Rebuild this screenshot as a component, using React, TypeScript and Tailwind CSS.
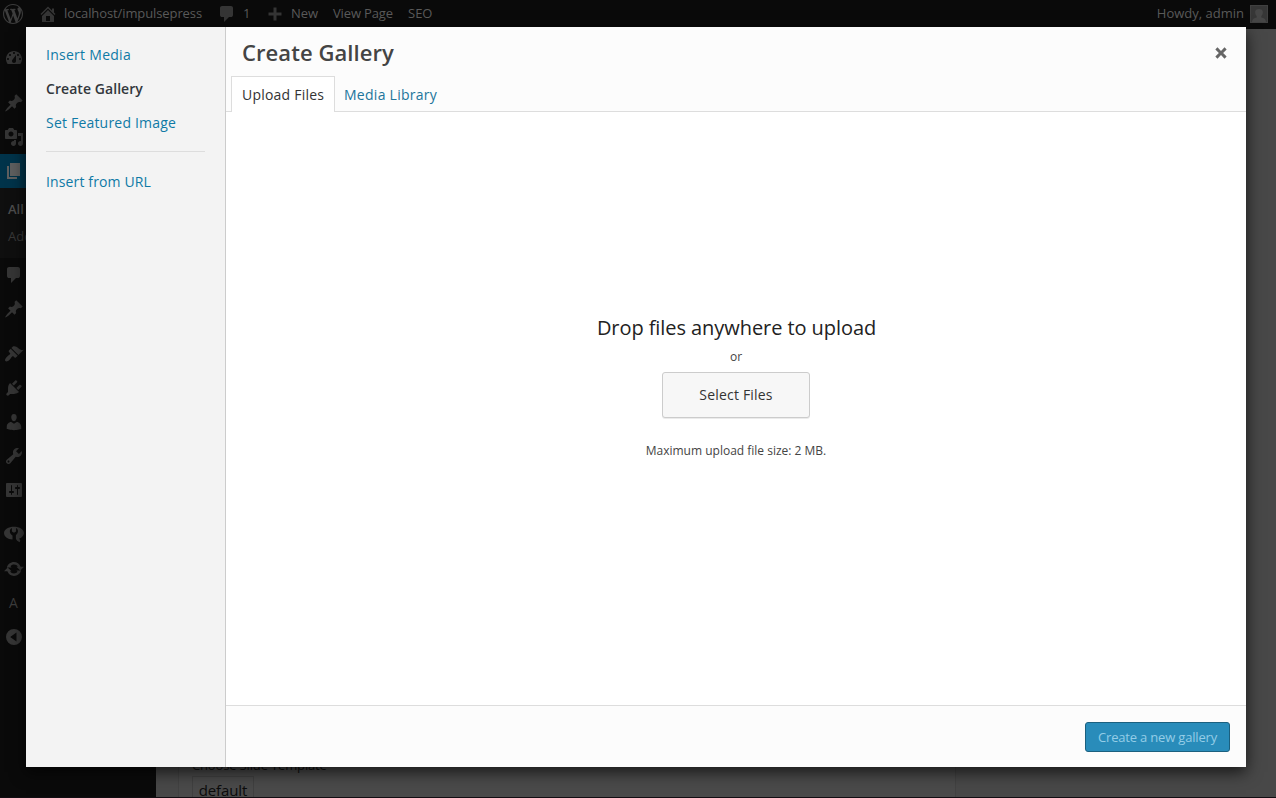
import React from "react";

const paths = {
  wordpress:
    "M20 10c0-5.51-4.49-10-10-10C4.48 0 0 4.49 0 10c0 5.52 4.48 10 10 10 5.51 0 10-4.48 10-10zM7.78 15.37L4.37 6.22c.55-.02 1.17-.08 1.17-.08.5-.06.44-1.13-.06-1.11 0 0-1.45.11-2.37.11-.18 0-.37 0-.58-.01C4.12 2.69 6.87 1.11 10 1.11c2.33 0 4.45.87 6.05 2.34-.68-.11-1.65.39-1.65 1.58 0 .74.45 1.36.9 2.1.35.61.55 1.36.55 2.46 0 1.49-1.4 5-1.4 5l-3.03-8.37c.54-.02.82-.17.82-.17.5-.05.44-1.25-.06-1.22 0 0-1.44.12-2.38.12-.87 0-2.33-.12-2.33-.12-.5-.03-.56 1.2-.06 1.22l.92.08 1.26 3.41zM17.41 10c.24-.64.74-1.87.43-4.25.7 1.29 1.05 2.71 1.05 4.25 0 3.29-1.73 6.24-4.4 7.78.97-2.59 1.94-5.2 2.92-7.78zM6.1 18.09C3.12 16.65 1.11 13.53 1.11 10c0-1.3.23-2.48.72-3.59C3.25 10.3 4.67 14.2 6.1 18.09zm4.03-6.63l2.58 6.98c-.86.29-1.76.45-2.71.45-.79 0-1.57-.11-2.29-.33.81-2.38 1.62-4.74 2.42-7.1z",
  home: "M16 8.5l1.53 1.53-1.06 1.06L10 4.6l-6.47 6.49-1.06-1.06L10 2.5l4 4v-2h2v4zm-6-2.46l6 5.99V18H4v-5.97zM12 17v-5H8v5h4z",
  comments:
    "M5 2h9q.82 0 1.41.59T16 4v7q0 .82-.59 1.41T14 13h-2l-5 5v-5H5q-.82 0-1.41-.59T3 11V4q0-.82.59-1.41T5 2z",
  plus: "M8.5 3.5h3v5h5v3h-5v5h-3v-5h-5v-3h5z",
  dashboard:
    "M3.76 16h12.48c1.1-1.37 1.76-3.11 1.76-5 0-4.42-3.58-8-8-8s-8 3.58-8 8c0 1.89.66 3.63 1.76 5zM10 4c.55 0 1 .45 1 1s-.45 1-1 1-1-.45-1-1 .45-1 1-1zM6 6c.55 0 1 .45 1 1s-.45 1-1 1-1-.45-1-1 .45-1 1-1zm8 0c.55 0 1 .45 1 1s-.45 1-1 1-1-.45-1-1 .45-1 1-1zm-5.37 5.55L12 7v6c0 1.1-.9 2-2 2s-2-.9-2-2c0-.57.24-1.08.63-1.45zM4 10c.55 0 1 .45 1 1s-.45 1-1 1-1-.45-1-1 .45-1 1-1zm12 0c.55 0 1 .45 1 1s-.45 1-1 1-1-.45-1-1 .45-1 1-1z",
  pin: "M10.44 3.02l1.82-1.82 6.36 6.35-1.83 1.82c-1.05-.68-2.48-.57-3.41.36l-.75.75c-.92.93-1.04 2.35-.35 3.41l-1.83 1.82-2.41-2.41-2.8 2.79c-.42.42-3.38 2.71-3.8 2.29s1.86-3.39 2.28-3.81l2.79-2.79L4.1 9.36l1.83-1.82c1.05.69 2.48.57 3.4-.36l.75-.75c.93-.92 1.05-2.35.36-3.41z",
  media:
    "M13 11V4c0-.55-.45-1-1-1h-1.67L9 1H5L3.67 3H2c-.55 0-1 .45-1 1v7c0 .55.45 1 1 1h10c.55 0 1-.45 1-1zM7 4.5c1.38 0 2.5 1.12 2.5 2.5S8.38 9.5 7 9.5 4.5 8.38 4.5 7 5.62 4.5 7 4.5zM14 6h5v10.5c0 1.38-1.12 2.5-2.5 2.5S14 17.88 14 16.5s1.12-2.5 2.5-2.5c.17 0 .34.02.5.05V9h-3V6zm-4 8.05V13h2v3.5c0 1.38-1.12 2.5-2.5 2.5S7 17.88 7 16.5 8.12 14 9.5 14c.17 0 .34.02.5.05z",
  page: "M6 15V2h10v13H6zm-1 1h8v2H3V5h2v11z",
  appearance:
    "M14.48 11.06L7.41 3.99l1.5-1.5c.5-.56 2.3-.47 3.51.32 1.21.8 1.43 1.28 2.91 2.1 1.18.64 2.45 1.26 4.45.85zm-.71.71L6.7 4.7 4.93 6.47c-.39.39-.39 1.02 0 1.41l1.06 1.06c.39.39.39 1.03 0 1.42-.6.6-1.43 1.11-2.21 1.69-.35.26-.7.53-1.01.84C1.43 14.23.4 16.08 1.4 17.07c.99 1 2.84-.03 4.18-1.36.31-.31.58-.66.85-1.02.57-.78 1.08-1.61 1.69-2.21.39-.39 1.02-.39 1.41 0l1.06 1.06c.39.39 1.02.39 1.41 0z",
  plugins:
    "M13.11 4.36L9.87 7.6 8 5.73l3.24-3.24c.35-.34 1.05-.2 1.56.32.52.51.66 1.21.31 1.55zm-8 1.77l.91-1.12 9.01 9.01-1.19.84c-.71.71-2.63 1.16-3.82 1.16H6.14L4.9 17.26c-.59.59-1.54.59-2.12 0-.59-.58-.59-1.53 0-2.12l1.24-1.24v-3.88c0-1.13.4-3.19 1.09-3.89zm7.26 3.97l3.24-3.24c.34-.35 1.04-.21 1.55.31.52.51.66 1.21.31 1.55l-3.24 3.25z",
  users:
    "M10 9.25c-2.27 0-2.73-3.44-2.73-3.44C7 4.02 7.82 2 9.97 2c2.16 0 2.98 2.02 2.71 3.81 0 0-.41 3.44-2.68 3.44zm0 2.57L12.72 10c2.39 0 4.52 2.33 4.52 4.53v2.49s-3.65 1.13-7.24 1.13c-3.65 0-7.24-1.13-7.24-1.13v-2.49c0-2.25 1.94-4.48 4.47-4.48z",
  tools:
    "M16.68 9.77c-1.34 1.34-3.3 1.67-4.95.99l-5.41 6.52c-.99.99-2.59.99-3.58 0s-.99-2.59 0-3.57l6.52-5.42c-.68-1.65-.35-3.61.99-4.95 1.28-1.28 3.12-1.62 4.72-1.06l-2.89 2.89 2.82 2.82 2.86-2.87c.53 1.58.18 3.39-1.08 4.65zM3.81 16.21c.4.39 1.04.39 1.43 0 .4-.4.4-1.04 0-1.43-.39-.4-1.03-.4-1.43 0-.39.39-.39 1.03 0 1.43z",
  settings:
    "M18 16V4c0-.55-.45-1-1-1H3c-.55 0-1 .45-1 1v12c0 .55.45 1 1 1h14c.55 0 1-.45 1-1zM8 11h1c.55 0 1 .45 1 1s-.45 1-1 1H8v1.5c0 .28-.22.5-.5.5s-.5-.22-.5-.5V13H6c-.55 0-1-.45-1-1s.45-1 1-1h1V5.5c0-.28.22-.5.5-.5s.5.22.5.5V11zm5-2h-1c-.55 0-1-.45-1-1s.45-1 1-1h1V5.500c0-.28.22-.5.5-.5s.5.22.5.5V7h1c.55 0 1 .45 1 1s-.45 1-1 1h-1v5.500c0 .28-.22.5-.5.5s-.5-.22-.5-.5V9z",
  wrenchRing:
    "M10 2.800C4.500 2.800 0 5.400 0 9c0 3.500 3.500 6.200 8.500 6.600V11.400C6.400 10.500 5.600 8.600 5.900 6.600 6.200 5.400 6.900 4.600 7.900 4.100V7.500L10 8.700l2.100-1.200V4.100C14.600 5.400 14.700 9.400 11.900 11v3.600c.4 1.700 1.700 3 3.900 3.600l.5-2-1.200-1.400C18 13.500 20 11.500 20 9c0-3.600-4.500-6.200-10-6.200z",
  sync: "M10 3c3 0 5.600 1.900 6.600 4.700H20l-3.700 3.800-3.900-3.800h1.500C13.100 6.300 11.700 5.500 10 5.500c-1.400 0-2.700.7-3.500 1.700l1.100 1.200H2.900c.7-3.100 3.700-5.400 7.100-5.400zM0 12.300l3.700-3.800 3.900 3.800H6.100c.8 1.400 2.200 2.200 3.900 2.200 1.400 0 2.700-.7 3.500-1.700l-1.100-1.200h4.700c-.7 3.100-3.700 5.400-7.100 5.400-3 0-5.600-1.900-6.600-4.700z",
  collapse: "M10 2a8 8 0 100 16 8 8 0 000-16zM12.500 5.500v9L6.200 10z",
  close:
    "M12.12 10l3.53 3.53-2.12 2.12L10 12.12l-3.54 3.54-2.12-2.12L7.88 10 4.34 6.46l2.12-2.12L10 7.88l3.54-3.53 2.12 2.12z",
};

type IconName = keyof typeof paths;

function Icon({ name, className = "size-5" }: { name: IconName; className?: string }) {
  return (
    <svg viewBox="0 0 20 20" fill="currentColor" fillRule="evenodd" className={`shrink-0 ${className}`}>
      <path d={paths[name]} />
    </svg>
  );
}

function MenuRow({ name, active = false }: { name: IconName; active?: boolean }) {
  return (
    <div
      className={
        active
          ? "flex h-[34px] items-center bg-[#00334a] pl-1 text-[#5f5f5f]"
          : "flex h-[34px] items-center pl-1 text-[#353535]"
      }
    >
      <Icon name={name} />
    </div>
  );
}

function AdminBar() {
  return (
    <header className="flex h-[29px] shrink-0 items-center bg-[#0a0a0a] pb-0.5 pl-[3px] pr-2 text-[13px] text-[#5a5a5a]">
      <Icon name="wordpress" className="size-5 text-[#3d3d3d]" />
      <Icon name="home" className="ml-[15px] size-5 text-[#353535]" />
      <span className="ml-[6px] w-[138px] tracking-[-0.1px]">localhost/impulsepress</span>
      <Icon name="comments" className="ml-[15px] size-5 text-[#353535]" />
      <span className="ml-[6px] w-[7px]">1</span>
      <Icon name="plus" className="ml-[15px] size-5 text-[#353535]" />
      <span className="ml-[6px] w-[27px]">New</span>
      <span className="ml-[15px] w-[60px] whitespace-nowrap tracking-[-0.15px]">View Page</span>
      <span className="ml-[15px]">SEO</span>
      <span className="ml-auto">Howdy, admin</span>
      <svg viewBox="0 0 18 18" className="ml-[6px] size-[18px]">
        <rect width="18" height="18" fill="#404040" />
        <rect x="1" y="1" width="16" height="16" fill="#363636" />
        <path d="M2 17c.3-3 2-4 4.700-4.500V11C5.300 9.500 5 8 5.200 6.500 5.500 4.800 7 4 9 4s3.500.8 3.800 2.500c.2 1.500-.1 3-1.500 4.500v1.500C14 13 15.700 14 16 17z" fill="#464646" />
      </svg>
    </header>
  );
}

function AdminMenu() {
  return (
    <nav className="w-[156px] shrink-0 bg-[#0a0a0a] pt-3">
      <MenuRow name="dashboard" />
      <div className="h-[11px]" />
      <MenuRow name="pin" />
      <MenuRow name="media" />
      <MenuRow name="page" active />
      <div className="flex h-[70px] flex-col bg-[#0f0f0f] pl-2 pt-2 text-[13px] leading-[27px]">
        <span className="font-semibold text-[#4d4d4d]">All Pages</span>
        <span className="text-[#383838]">Add New</span>
      </div>
      <MenuRow name="comments" />
      <MenuRow name="pin" />
      <div className="h-[11px]" />
      <MenuRow name="appearance" />
      <MenuRow name="plugins" />
      <MenuRow name="users" />
      <MenuRow name="tools" />
      <MenuRow name="settings" />
      <div className="h-[10px]" />
      <MenuRow name="wrenchRing" />
      <div className="h-px" />
      <MenuRow name="sync" />
      <div className="flex h-[34px] items-center pl-[9px] text-sm text-[#3d3d3d]">A</div>
      <MenuRow name="collapse" />
    </nav>
  );
}

function EditorPage() {
  return (
    <main className="flex flex-1 flex-col justify-end bg-[#484848] pl-[22px] pr-[320px]">
      <div className="h-[42px] border-x border-[#424242] bg-[#4a4a4a] pl-[13px]">
        <div className="text-[13px] leading-[20px] tracking-[-0.15px] text-[#101010]">Choose Slide Template</div>
        <div className="mt-px flex h-[21px] w-[62px] items-center justify-center border border-b-0 border-[#404040] pt-[6px] text-[15px] leading-[15px] tracking-[-0.1px] text-[#0c0c0c]">
          default
        </div>
      </div>
    </main>
  );
}

function MediaSidebar() {
  return (
    <aside className="flex w-[200px] shrink-0 flex-col border-r border-[#cccccc] bg-[#f3f3f3] px-5 pt-[11px] text-[14px] leading-[34px] text-[#0f7aa6]">
      <a className="tracking-[0.27px]">Insert Media</a>
      <a className="font-semibold tracking-[0.06px] text-[#32373c]">Create Gallery</a>
      <a className="tracking-[0.2px]">Set Featured Image</a>
      <hr className="mb-[13px] mt-[11px] border-[#dddddd]" />
      <a className="tracking-[0.13px]">Insert from URL</a>
    </aside>
  );
}

function MediaModal() {
  return (
    <section className="absolute left-[26px] top-[27px] flex h-[740px] w-[1220px] bg-white shadow-[0_5px_15px_rgba(0,0,0,0.7)]">
      <MediaSidebar />
      <div className="flex flex-1 flex-col">
        <div className="flex h-[85px] flex-col border-b border-[#dddddd] bg-[#fcfcfc]">
          <div className="flex h-[49px] items-center justify-between pb-px pl-4 pr-[15px] pt-1">
            <h1 className="pb-0.5 text-[22px] font-semibold leading-none tracking-[0.07px] text-[#444444]">Create Gallery</h1>
            <Icon name="close" className="size-5 text-[#666666]" />
          </div>
          <div className="flex h-9 pl-[5px] text-[14px]">
            <div className="-mb-px mt-px flex w-[104px] items-center border border-b-0 border-[#dddddd] bg-white pb-px pl-[10px] tracking-[0.22px] text-[#333333]">
              Upload Files
            </div>
            <div className="flex items-center pl-[9px] pt-[3px] tracking-[0.27px] text-[#21759b]">Media Library</div>
          </div>
        </div>
        <div className="flex flex-1 flex-col items-center pt-[200px] text-[12px] text-[#444444]">
          <h2 className="pl-px text-[20px] leading-8 tracking-[-0.07px] text-[#222222]">Drop files anywhere to upload</h2>
          <p className="mt-1 leading-[18px]">or</p>
          <button className="mt-[6px] h-[46px] w-[148px] rounded-[3px] border border-[#cccccc] bg-[#f7f7f7] pb-px text-[14px] tracking-[0.2px] text-[#333333] shadow-[0_1px_0_rgba(0,0,0,0.08)]">
            Select Files
          </button>
          <p className="mt-6 leading-[18px]">Maximum upload file size: 2 MB.</p>
        </div>
        <div className="flex h-[62px] items-center justify-end border-t border-[#dddddd] bg-[#fcfcfc] pr-4 pt-px">
          <button className="h-[30px] w-[145px] rounded-[3px] border border-[#1b607f] bg-[#298cba] pt-px text-[13px] tracking-[-0.18px] text-[#94cde7]">
            Create a new gallery
          </button>
        </div>
      </div>
    </section>
  );
}

export default function App() {
  return (
    <div className="relative flex h-[798px] w-[1276px] flex-col overflow-hidden border-b border-[#120d12] bg-[#0a0a0a] font-['Open_Sans',sans-serif]">
      <AdminBar />
      <div className="flex min-h-0 flex-1">
        <AdminMenu />
        <EditorPage />
      </div>
      <MediaModal />
    </div>
  );
}
